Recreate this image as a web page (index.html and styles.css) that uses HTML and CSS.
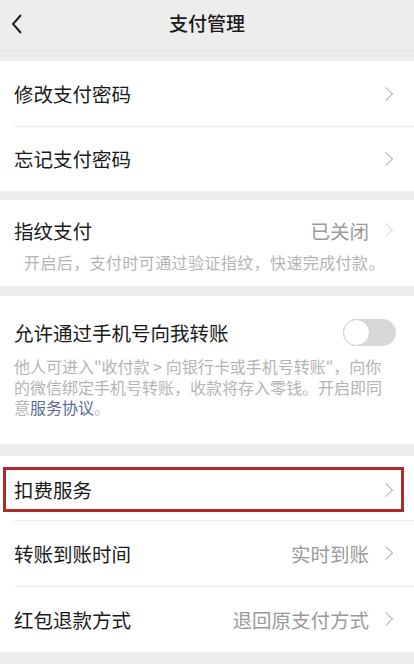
FILE: index.html
```html
<!DOCTYPE html>
<html>

<head>
	<meta charset="utf-8">
	<title>支付管理</title>
	<link rel="stylesheet" href="styles.css">
</head>

<body>
	<div class="header">
		<a href="#" class="back">
			<svg width="14" height="22" viewBox="0 0 14 22"><path d="M11 2 L3 11 L11 20" fill="none" stroke="#222" stroke-width="2"/></svg>
		</a>
		<div class="title">支付管理</div>
	</div>

	<div class="group">
		<div class="row">
			<span class="label">修改支付密码</span>
			<span class="arrow"></span>
		</div>
		<div class="row">
			<span class="label">忘记支付密码</span>
			<span class="arrow"></span>
		</div>
	</div>

	<div class="group g-finger">
		<div class="row row-top">
			<span class="label">指纹支付</span>
			<span class="value">已关闭</span>
			<span class="arrow light"></span>
		</div>
		<p class="desc indent">开启后，支付时可通过验证指纹，快速完成付款。</p>
	</div>

	<div class="group g-phone">
		<div class="row row-top">
			<span class="label">允许通过手机号向我转账</span>
			<span class="switch"><i></i></span>
		</div>
		<p class="desc">他人可进入"收付款 &gt; 向银行卡或手机号转账"，向你的微信绑定手机号转账，收款将存入零钱。开启即同<br><span>意</span><a href="#">服务协议</a><span>。</span></p>
	</div>

	<div class="group g-more">
		<div class="row marked">
			<span class="label">扣费服务</span>
			<span class="arrow"></span>
		</div>
		<div class="row">
			<span class="label">转账到账时间</span>
			<span class="value">实时到账</span>
			<span class="arrow"></span>
		</div>
		<div class="row">
			<span class="label">红包退款方式</span>
			<span class="value">退回原支付方式</span>
			<span class="arrow"></span>
		</div>
	</div>
</body>

</html>
```

FILE: styles.css
```css
body {
	margin: 0;
	background: #ededed;
	font-family: "Noto Sans CJK SC", "Liberation Sans", sans-serif;
	color: #1a1a1a;
}

.header {
	height: 51px;
	padding-bottom: 5px;
	box-sizing: border-box;
	display: flex;
	align-items: center;
	justify-content: center;
	position: relative;
	border-bottom: 1px solid #e4e4e4;
	background: #ededed;
}

.header .title {
	font-size: 19px;
	font-weight: 500;
}

.header .back {
	position: absolute;
	left: 10px;
	top: 13px;
}

.group {
	display: flow-root;
	background: #fff;
	margin-top: 10px;
}

.g-finger {
	margin-top: 9px;
	height: 86px;
}

.g-phone {
	margin-top: 10px;
	height: 148px;
}

.g-more {
	margin-top: 12px;
}

.row {
	height: 65px;
	display: flex;
	align-items: center;
	padding: 0 20px 0 14px;
	position: relative;
	box-sizing: border-box;
}

.g-more .row {
	height: 66px;
}

.row + .row:before {
	content: "";
	position: absolute;
	left: 14px;
	right: 0;
	top: 0;
	border-top: 1px solid #ececec;
}

.row-top {
	height: 60px;
}

.g-phone .row-top {
	height: 72px;
}

.label {
	flex: 1;
	font-size: 19.5px;
}

.value {
	font-size: 19.5px;
	color: #9a9a9a;
	margin-right: 12px;
}

.arrow {
	width: 9px;
	height: 9px;
	border-top: 1.5px solid #b5b5b5;
	border-right: 1.5px solid #b5b5b5;
	transform: rotate(45deg);
	margin-right: 3px;
}

.arrow.light {
	border-color: #dcdcdc;
}

.desc {
	margin: -12px 0 0;
	padding: 0 24px 0 14px;
	font-size: 16px;
	line-height: 20.5px;
	color: #b4b4b4;
}

.desc.indent {
	margin-top: -8px;
	padding-left: 24px;
	letter-spacing: 0.4px;
}

.desc a {
	color: #576b95;
	text-decoration: none;
}

.switch {
	width: 53px;
	height: 27px;
	border-radius: 14px;
	background: #d8d8d8;
	position: relative;
	margin-right: -2px;
}

.switch i {
	position: absolute;
	left: 0;
	top: 0;
	width: 25px;
	height: 25px;
	border-radius: 50%;
	background: #fff;
	border: 1px solid #d2d2d2;
}

.g-more .marked {
	outline: 3px solid #b02a2a;
	outline-offset: -3px;
	height: 45px;
	margin: 11px 10px 8px 3px;
	padding-left: 11px;
	padding-right: 10px;
}
```
